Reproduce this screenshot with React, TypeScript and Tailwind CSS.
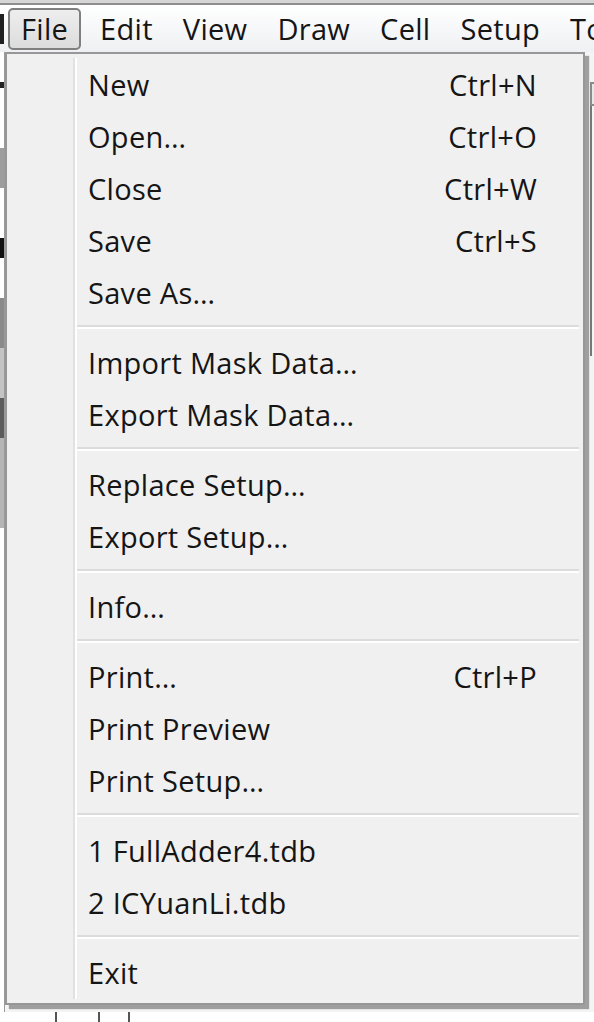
import React from "react";

type Item = { label: string; shortcut?: string } | "sep";

const items: Item[] = [
  { label: "New", shortcut: "Ctrl+N" },
  { label: "Open…", shortcut: "Ctrl+O" },
  { label: "Close", shortcut: "Ctrl+W" },
  { label: "Save", shortcut: "Ctrl+S" },
  { label: "Save As…" },
  "sep",
  { label: "Import Mask Data…" },
  { label: "Export Mask Data…" },
  "sep",
  { label: "Replace Setup…" },
  { label: "Export Setup…" },
  "sep",
  { label: "Info…" },
  "sep",
  { label: "Print…", shortcut: "Ctrl+P" },
  { label: "Print Preview" },
  { label: "Print Setup…" },
  "sep",
  { label: "1 FullAdder4.tdb" },
  { label: "2 ICYuanLi.tdb" },
  "sep",
  { label: "Exit" },
];

const menus = ["Edit", "View", "Draw", "Cell", "Setup", "Tools"];

export default function App() {
  return (
    <div
      className="w-[594px] h-[1022px] overflow-hidden bg-[#f4f4f4] text-[#151515] text-[29px] leading-none tracking-[0.3px]"
      style={{ fontFamily: '"Open Sans", "Noto Sans", sans-serif' }}
    >
      {/* window strip above the menu bar */}
      <div className="h-[5px] bg-[#d6d6d6] border-b-2 border-[#8e8e8e]" />

      {/* menu bar */}
      <div className="h-[47px] flex items-center bg-gradient-to-b from-white to-[#eef0f3] whitespace-nowrap">
        <div className="w-[4px] h-[30px] bg-[#202020] mr-[4px] shrink-0" />
        <div className="h-[42px] px-[11px] flex items-center rounded-[5px] border-2 border-[#7f7f7f] bg-gradient-to-b from-[#eeeeee] to-[#dcdcdc] shrink-0">
          File
        </div>
        {menus.map((m) => (
          <div key={m} className="h-[42px] px-[11px] ml-[8px] flex items-center shrink-0">
            {m}
          </div>
        ))}
      </div>

      <div className="flex">
        {/* bits of the window behind, left */}
        <div className="w-[5px] h-[960px] flex flex-col bg-white border-r border-[#9a9a9a]">
          <div className="h-[30px]" />
          <div className="h-[6px] bg-[#222]" />
          <div className="h-[60px]" />
          <div className="h-[40px] bg-[#9d9d9d]" />
          <div className="h-[50px]" />
          <div className="h-[20px] bg-[#111]" />
          <div className="h-[40px]" />
          <div className="h-[50px] bg-[#8a8a8a]" />
          <div className="h-[50px] bg-[#c4c4c4]" />
          <div className="h-[40px] bg-[#5c5c5c]" />
          <div className="h-[90px] bg-[#b5b5b5]" />
        </div>

        {/* dropdown */}
        <div className="w-[580px] h-[953px] flex flex-col border-2 border-[#979797] bg-[#f0f0f0] shadow-[4px_4px_1px_rgba(0,0,0,0.35)]">
          <div className="flex flex-1 py-[4px]">
            <div className="w-[66px] shrink-0" />
            <div className="w-[2px] bg-[#e1e1e1]" />
            <div className="w-[2px] bg-white" />
            <div className="flex-1 flex flex-col">
              {items.map((it, i) =>
                it === "sep" ? (
                  <div key={i} className="h-[18px] flex flex-col justify-center pr-[4px]">
                    <div className="h-[2px] bg-[#dcdcdc]" />
                    <div className="h-[2px] bg-white" />
                  </div>
                ) : (
                  <div key={i} className="h-[52px] flex items-center justify-between pl-[11px] pr-[46px] whitespace-nowrap">
                    <span>{it.label}</span>
                    {it.shortcut && <span>{it.shortcut}</span>}
                  </div>
                )
              )}
            </div>
          </div>
        </div>

        {/* right side behind */}
        <div className="flex-1 flex flex-col pl-[5px]">
          <div className="h-[30px]" />
          <div className="h-[24px] border-l-2 border-y-2 border-[#8a8a8a] bg-[#e8e8e8]" />
          <div className="h-[250px] border-l-2 border-[#777]" />
        </div>
      </div>

      {/* bottom bits of the window behind */}
      <div className="flex h-[20px] bg-white">
        <div className="w-[57px] border-r-2 border-[#555]" />
        <div className="w-[43px] border-r-2 border-[#555]" />
        <div className="w-[30px] border-r-2 border-[#555]" />
      </div>
    </div>
  );
}
